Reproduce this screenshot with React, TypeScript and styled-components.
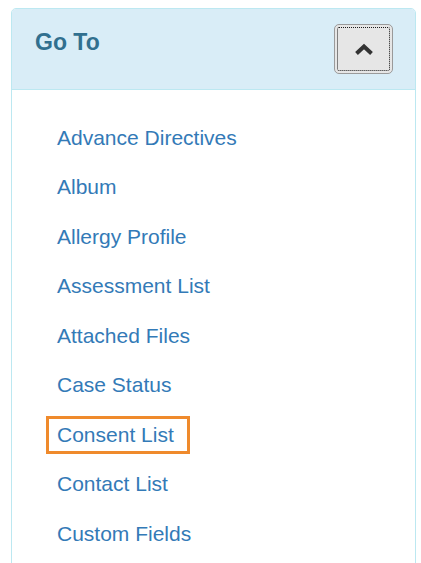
import React from 'react';
import styled, { createGlobalStyle } from 'styled-components';

const GlobalStyle = createGlobalStyle`
  body {
    margin: 0;
    background: #fff;
    font-family: "Liberation Sans", Arial, Helvetica, sans-serif;
  }
`;

const Page = styled.div`
  padding: 8px 5px 0 11px;
  height: 563px;
  overflow: hidden;
  box-sizing: border-box;
`;

const Panel = styled.div`
  border: 1px solid #bce8f1;
  border-radius: 5px;
  background: #fff;
  height: 600px;
`;

const Header = styled.div`
  display: flex;
  justify-content: space-between;
  align-items: flex-start;
  padding: 15px 22px 15px 23px;
  background: #d9edf7;
  border-bottom: 1px solid #bce8f1;
  border-radius: 4px 4px 0 0;
`;

const Title = styled.h3`
  margin: 6px 0 0;
  font-size: 23px;
  line-height: 1.1;
  font-weight: 700;
  color: #31708f;
`;

const ToggleButton = styled.button`
  display: flex;
  align-items: center;
  justify-content: center;
  width: 59px;
  height: 50px;
  padding: 0;
  background: #e6e6e6;
  border: 1px solid #9a9a9a;
  border-radius: 5px;
  outline: 1px dotted #1a1a1a;
  outline-offset: -4px;
  cursor: pointer;
`;

const LinkList = styled.ul`
  list-style: none;
  margin: 0;
  padding: 29px 22px 0 34px;
  display: flex;
  flex-direction: column;
  align-items: flex-start;
  gap: 11.45px;
`;

const LinkItem = styled.li`
  display: block;
`;

const NavLink = styled.a<{ $focused?: boolean }>`
  display: inline-block;
  padding: 1px 13px 1px 8px;
  border: 3px solid ${({ $focused }) => ($focused ? '#ef8a2c' : 'transparent')};
  font-size: 21px;
  line-height: 30px;
  color: #337ab7;
  text-decoration: none;
`;

const links = [
  'Advance Directives',
  'Album',
  'Allergy Profile',
  'Assessment List',
  'Attached Files',
  'Case Status',
  'Consent List',
  'Contact List',
  'Custom Fields',
];

const App = () => (
  <>
    <GlobalStyle />
    <Page>
      <Panel>
        <Header>
          <Title>Go To</Title>
          <ToggleButton aria-label="Collapse">
            <svg width="20" height="13" viewBox="0 0 20 13">
              <polyline
                points="2.5,10.5 10,3.5 17.5,10.5"
                fill="none"
                stroke="#333"
                strokeWidth="4"
              />
            </svg>
          </ToggleButton>
        </Header>
        <LinkList>
          {links.map((label) => (
            <LinkItem key={label}>
              <NavLink href="#" $focused={label === 'Consent List'}>
                {label}
              </NavLink>
            </LinkItem>
          ))}
        </LinkList>
      </Panel>
    </Page>
  </>
);

export default App;
